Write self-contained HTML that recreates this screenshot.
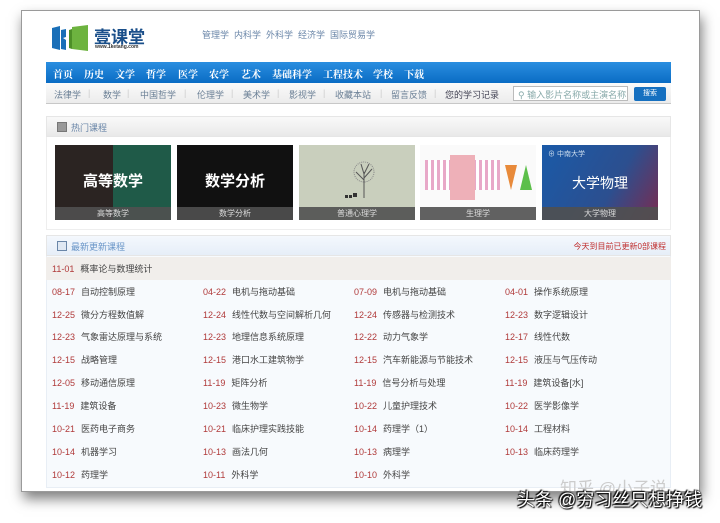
<!DOCTYPE html>
<html><head><meta charset="utf-8"><style>
*{margin:0;padding:0;box-sizing:border-box}
body{width:720px;height:523px;background:#fff;position:relative;overflow:hidden;font-family:"Liberation Sans","Noto Sans CJK SC",sans-serif;font-size:9px;color:#333}
.a{position:absolute}
.frame{left:21px;top:10px;width:679px;height:482px;border:1px solid #9a9a9a;background:#fff;box-shadow:2px 7px 12px rgba(0,0,0,.5)}
.nav{left:46px;top:62px;width:625px;height:21px;background:linear-gradient(#2a8ee0,#0a6cc4);color:#fff;font-weight:bold;font-size:10px;font-family:"Noto Serif CJK SC",serif}
.nav span{position:absolute;top:4px}
.sub{left:46px;top:83px;width:625px;height:21px;background:linear-gradient(#fafafa,#ececec);border-bottom:1px solid #c8c8c8;color:#6a7f95}
.sub span{position:absolute;top:5px}
.ph{left:46px;height:21px;width:625px;background:linear-gradient(#f9f9f9,#e9e9e9);border:1px solid #e6e6e6}
.pic{top:145px;width:116px;height:75px}
.cap{position:absolute;left:0;bottom:0;width:100%;height:13px;background:rgba(80,80,80,.9);color:#ddd;text-align:center;font-size:8px;line-height:13px}
.row{position:absolute;left:46px;width:625px;height:23px}
.it{position:absolute;top:5px;white-space:nowrap;color:#444}
.it b{font-weight:normal;color:#b03a3a;margin-right:6px;font-family:"Liberation Sans",sans-serif}
</style></head><body>
<div class="a frame"></div>
<svg class="a" style="left:52px;top:24px" width="40" height="28" viewBox="0 0 40 28"><path d="M0 4 L8 2 L8 26 L0 24Z" fill="#1a6fb8"/><path d="M9 6 L14 5 L14 13 L11 14 L14 16 L14 26 L9 25Z" fill="#1a6fb8"/><path d="M20 3 L36 1 L36 27 L20 25Z" fill="#6db33f"/><path d="M17 6 L20 5 L20 25 L17 24Z" fill="#4d8f28"/></svg>
<div class="a" style="left:94px;top:23px;font-size:17px;font-weight:bold;color:#1a4f8a;font-family:'Noto Sans CJK SC',sans-serif">壹课堂</div>
<div class="a" style="left:95px;top:44px;font-size:5px;color:#333;font-weight:bold">www.1ketang.com</div>
<div class="a" style="left:202px;top:28px;color:#6a86a8;font-size:9px">管理学&nbsp; 内科学&nbsp; 外科学&nbsp; 经济学&nbsp; 国际贸易学</div>
<div class="a nav"><span style="left:7px">首页</span><span style="left:38px">历史</span><span style="left:69px">文学</span><span style="left:100px">哲学</span><span style="left:132px">医学</span><span style="left:163px">农学</span><span style="left:195px">艺术</span><span style="left:226px">基础科学</span><span style="left:277px">工程技术</span><span style="left:327px">学校</span><span style="left:358px">下载</span></div>
<div class="a sub"><span style="left:8px">法律学</span><span style="left:42px;color:#ccc">|</span><span style="left:57px">数学</span><span style="left:81px;color:#ccc">|</span><span style="left:94px">中国哲学</span><span style="left:138px;color:#ccc">|</span><span style="left:151px">伦理学</span><span style="left:185px;color:#ccc">|</span><span style="left:197px">美术学</span><span style="left:231px;color:#ccc">|</span><span style="left:243px">影视学</span><span style="left:277px;color:#ccc">|</span><span style="left:289px">收藏本站</span><span style="left:334px;color:#ccc">|</span><span style="left:345px">留言反馈</span><span style="left:388px;color:#ccc">|</span><span style="left:399px;color:#445">您的学习记录</span>
<div style="position:absolute;left:467px;top:3px;width:115px;height:15px;border:1px solid #bbb;background:#fff;color:#8aa;font-size:9px;padding:1px 0 0 4px">⚲ 输入影片名称或主演名称</div>
<div style="position:absolute;left:588px;top:4px;width:32px;height:14px;background:#1670c0;border-radius:2px;color:#fff;font-size:7px;text-align:center;line-height:14px">搜索</div></div>
<div class="a ph" style="top:116px"><div style="position:absolute;left:10px;top:5px;width:10px;height:10px;background:#999;border:1px solid #777"></div><span style="position:absolute;left:24px;top:4px;color:#6a86a8;font-size:9px">热门课程</span></div>
<div class="a" style="left:46px;top:137px;width:625px;height:93px;border:1px solid #eee;border-top:0"></div>
<div class="a pic" style="left:55px;background:linear-gradient(90deg,#2b2422 0 50%,#1f5a48 50%)"><div style="position:absolute;left:0;top:25px;width:100%;text-align:center;color:#fff;font-size:15px;font-weight:bold">高等数学</div><div class="cap">高等数学</div></div>
<div class="a pic" style="left:177px;background:#111"><div style="position:absolute;left:0;top:25px;width:100%;text-align:center;color:#fff;font-size:15px;font-weight:bold">数学分析</div><div class="cap">数学分析</div></div>
<div class="a pic" style="left:299px;background:#c9cfbd"><svg style="position:absolute;left:40px;top:15px" width="40" height="40"><path d="M25 38V12M25 20l-8-8M25 18l8-9M25 14l-3-10M25 14l5-10" stroke="#555" fill="none"/><circle cx="25" cy="12" r="10" fill="none" stroke="#888" stroke-dasharray="1 1"/><rect x="14" y="33" width="4" height="4" fill="#333"/><rect x="6" y="35" width="3" height="3" fill="#333"/><rect x="10" y="35" width="3" height="3" fill="#333"/></svg><div class="cap">普通心理学</div></div>
<div class="a pic" style="left:420px;background:#fafafa"><div style="position:absolute;left:5px;top:15px;width:75px;height:30px;background:repeating-linear-gradient(90deg,#e8a8c8 0 3px,#fff 3px 6px)"></div><div style="position:absolute;left:30px;top:10px;width:25px;height:45px;background:#eeb0b8"></div><div style="position:absolute;left:85px;top:20px;width:0;height:0;border-left:6px solid transparent;border-right:6px solid transparent;border-top:25px solid #e88a3a"></div><div style="position:absolute;left:100px;top:20px;width:0;height:0;border-left:6px solid transparent;border-right:6px solid transparent;border-bottom:25px solid #5cbf4a"></div><div class="cap">生理学</div></div>
<div class="a pic" style="left:542px;background:linear-gradient(120deg,#1a5aa8,#2c4f8f 60%,#7a2b4f)"><div style="position:absolute;left:0;top:28px;width:100%;text-align:center;color:#fff;font-size:14px">大学物理</div><div style="position:absolute;left:6px;top:4px;color:#cde;font-size:7px">⊕ 中南大学</div><div class="cap">大学物理</div></div>
<div class="a ph" style="top:235px;background:linear-gradient(#f4f8fd,#e6eef8)"><div style="position:absolute;left:10px;top:5px;width:10px;height:10px;border:1px solid #6a86a8;background:#dfe8f3"></div><span style="position:absolute;left:24px;top:4px;color:#6a96c8;font-size:9px">最新更新课程</span><span style="position:absolute;right:4px;top:5px;color:#c03030;font-size:8px">今天到目前已更新0部课程</span></div>
<div class="a" style="left:46px;top:256px;width:625px;height:232px;border:1px solid #e8eef5;border-top:0;background:#f7fafd"></div>
<div class="row" style="top:257px;background:#f1eeeb"><span class="it" style="left:6px"><b>11-01</b>概率论与数理统计</span></div>
<div class="row" style="top:280px"><span class="it" style="left:6px"><b>08-17</b>自动控制原理</span><span class="it" style="left:157px"><b>04-22</b>电机与拖动基础</span><span class="it" style="left:308px"><b>07-09</b>电机与拖动基础</span><span class="it" style="left:459px"><b>04-01</b>操作系统原理</span></div>
<div class="row" style="top:303px"><span class="it" style="left:6px"><b>12-25</b>微分方程数值解</span><span class="it" style="left:157px"><b>12-24</b>线性代数与空间解析几何</span><span class="it" style="left:308px"><b>12-24</b>传感器与检测技术</span><span class="it" style="left:459px"><b>12-23</b>数字逻辑设计</span></div>
<div class="row" style="top:325px"><span class="it" style="left:6px"><b>12-23</b>气象雷达原理与系统</span><span class="it" style="left:157px"><b>12-23</b>地理信息系统原理</span><span class="it" style="left:308px"><b>12-22</b>动力气象学</span><span class="it" style="left:459px"><b>12-17</b>线性代数</span></div>
<div class="row" style="top:348px"><span class="it" style="left:6px"><b>12-15</b>战略管理</span><span class="it" style="left:157px"><b>12-15</b>港口水工建筑物学</span><span class="it" style="left:308px"><b>12-15</b>汽车新能源与节能技术</span><span class="it" style="left:459px"><b>12-15</b>液压与气压传动</span></div>
<div class="row" style="top:371px"><span class="it" style="left:6px"><b>12-05</b>移动通信原理</span><span class="it" style="left:157px"><b>11-19</b>矩阵分析</span><span class="it" style="left:308px"><b>11-19</b>信号分析与处理</span><span class="it" style="left:459px"><b>11-19</b>建筑设备[水]</span></div>
<div class="row" style="top:394px"><span class="it" style="left:6px"><b>11-19</b>建筑设备</span><span class="it" style="left:157px"><b>10-23</b>微生物学</span><span class="it" style="left:308px"><b>10-22</b>儿童护理技术</span><span class="it" style="left:459px"><b>10-22</b>医学影像学</span></div>
<div class="row" style="top:417px"><span class="it" style="left:6px"><b>10-21</b>医药电子商务</span><span class="it" style="left:157px"><b>10-21</b>临床护理实践技能</span><span class="it" style="left:308px"><b>10-14</b>药理学（1）</span><span class="it" style="left:459px"><b>10-14</b>工程材料</span></div>
<div class="row" style="top:440px"><span class="it" style="left:6px"><b>10-14</b>机器学习</span><span class="it" style="left:157px"><b>10-13</b>画法几何</span><span class="it" style="left:308px"><b>10-13</b>病理学</span><span class="it" style="left:459px"><b>10-13</b>临床药理学</span></div>
<div class="row" style="top:463px"><span class="it" style="left:6px"><b>10-12</b>药理学</span><span class="it" style="left:157px"><b>10-11</b>外科学</span><span class="it" style="left:308px"><b>10-10</b>外科学</span></div>
<div class="a" style="left:560px;top:474px;color:#ccc;font-size:17px;height:17px;overflow:hidden">知乎 @小子说</div>
<div class="a" style="left:517px;top:486px;color:#fff;font-size:18px;text-shadow:0 0 2px #000,1px 1px 1px #000,-1px -1px 1px #000">头条 @穷习丝只想挣钱</div>
</body></html>
